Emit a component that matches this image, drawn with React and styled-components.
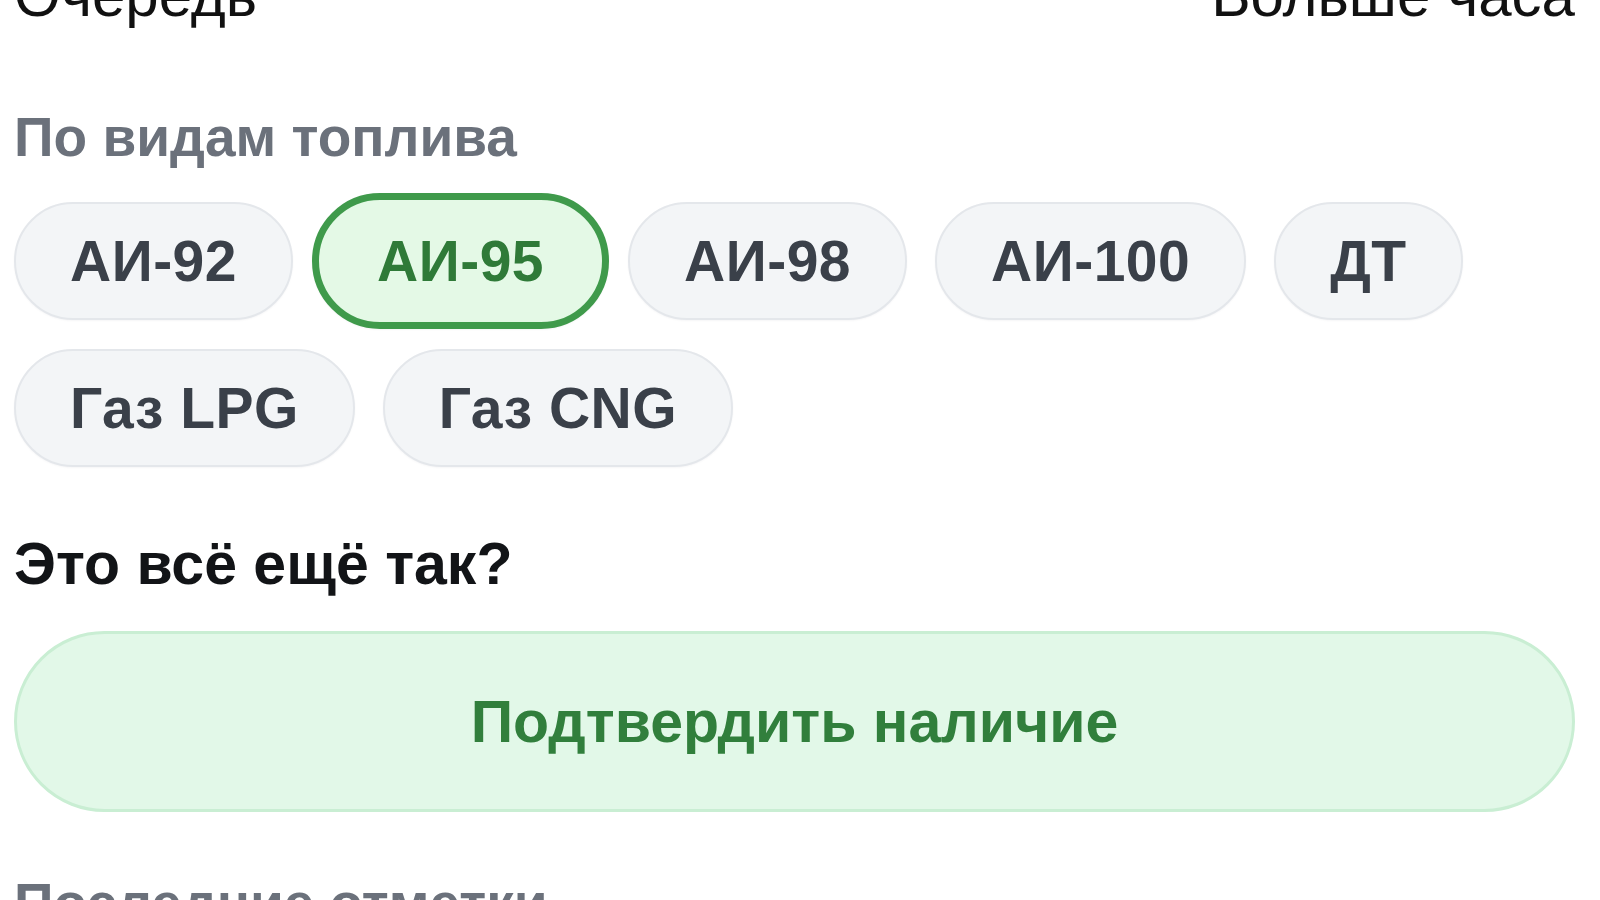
import React, { useState } from "react";
import styled, { createGlobalStyle } from "styled-components";

const GlobalStyle = createGlobalStyle`
  html, body {
    margin: 0;
    padding: 0;
    background: #ffffff;
    overflow: hidden;
  }
  body {
    font-family: "Liberation Sans", Arial, Helvetica, sans-serif;
    -webkit-font-smoothing: antialiased;
  }
`;

// the view is scrolled: the first row is cut by the top edge
const Page = styled.div`
  margin-top: -39px;
  padding: 0 25px 0 14px;
  display: flex;
  flex-direction: column;
`;

const InfoRow = styled.div`
  display: flex;
  justify-content: space-between;
  align-items: baseline;
  font-size: 60px;
  line-height: 1.15;
  color: #111111;
`;

const SectionTitle = styled.h3`
  margin: ${props => props.$top || 0}px 0 0;
  font-size: 55px;
  line-height: 66px;
  font-weight: 700;
  color: #6b717b;
`;

const Chips = styled.div`
  display: flex;
  flex-wrap: wrap;
  align-items: center;
  column-gap: 28px;
  row-gap: 28px;
  margin-top: 31px;
`;

const Chip = styled.button`
  box-sizing: border-box;
  font-family: inherit;
  font-size: 57px;
  font-weight: 700;
  line-height: 68px;
  letter-spacing: 0.5px;
  padding: 23px 54px;
  border-radius: 999px;
  border: 2px solid #e4e7eb;
  background: #f3f5f7;
  color: #3a4049;
  cursor: pointer;
  box-shadow: 0 1px 2px rgba(17, 24, 39, 0.04);

  ${props => props.$active && `
    margin: -8px -9px;
    padding: 27px 58px;
    border: 7px solid #3f9a4b;
    background: #e4f9e6;
    color: #2f7a38;
  `}
`;

const Question = styled.h2`
  margin: 63px 0 0;
  font-size: 59px;
  line-height: 68px;
  font-weight: 700;
  color: #121417;
`;

const ConfirmButton = styled.button`
  box-sizing: border-box;
  margin-top: 33px;
  width: 100%;
  height: 181px;
  border-radius: 999px;
  border: 3px solid #c9eed3;
  background: #e2f8e8;
  color: #317f3c;
  font-family: inherit;
  font-size: 59px;
  font-weight: 700;
  cursor: pointer;
`;

const fuels = ["АИ-92", "АИ-95", "АИ-98", "АИ-100", "ДТ", "Газ LPG", "Газ CNG"];

export default function App() {
  const [selected, setSelected] = useState("АИ-95");

  return (
    <>
      <GlobalStyle />
      <Page>
        <InfoRow>
          <span>Очередь</span>
          <span>Больше часа</span>
        </InfoRow>

        <SectionTitle $top={74}>По видам топлива</SectionTitle>
        <Chips>
          {fuels.map(f => (
            <Chip key={f} $active={f === selected} onClick={() => setSelected(f)}>
              {f}
            </Chip>
          ))}
        </Chips>

        <Question>Это всё ещё так?</Question>
        <ConfirmButton>Подтвердить наличие</ConfirmButton>

        <SectionTitle $top={58}>Последние отметки</SectionTitle>
      </Page>
    </>
  );
}
